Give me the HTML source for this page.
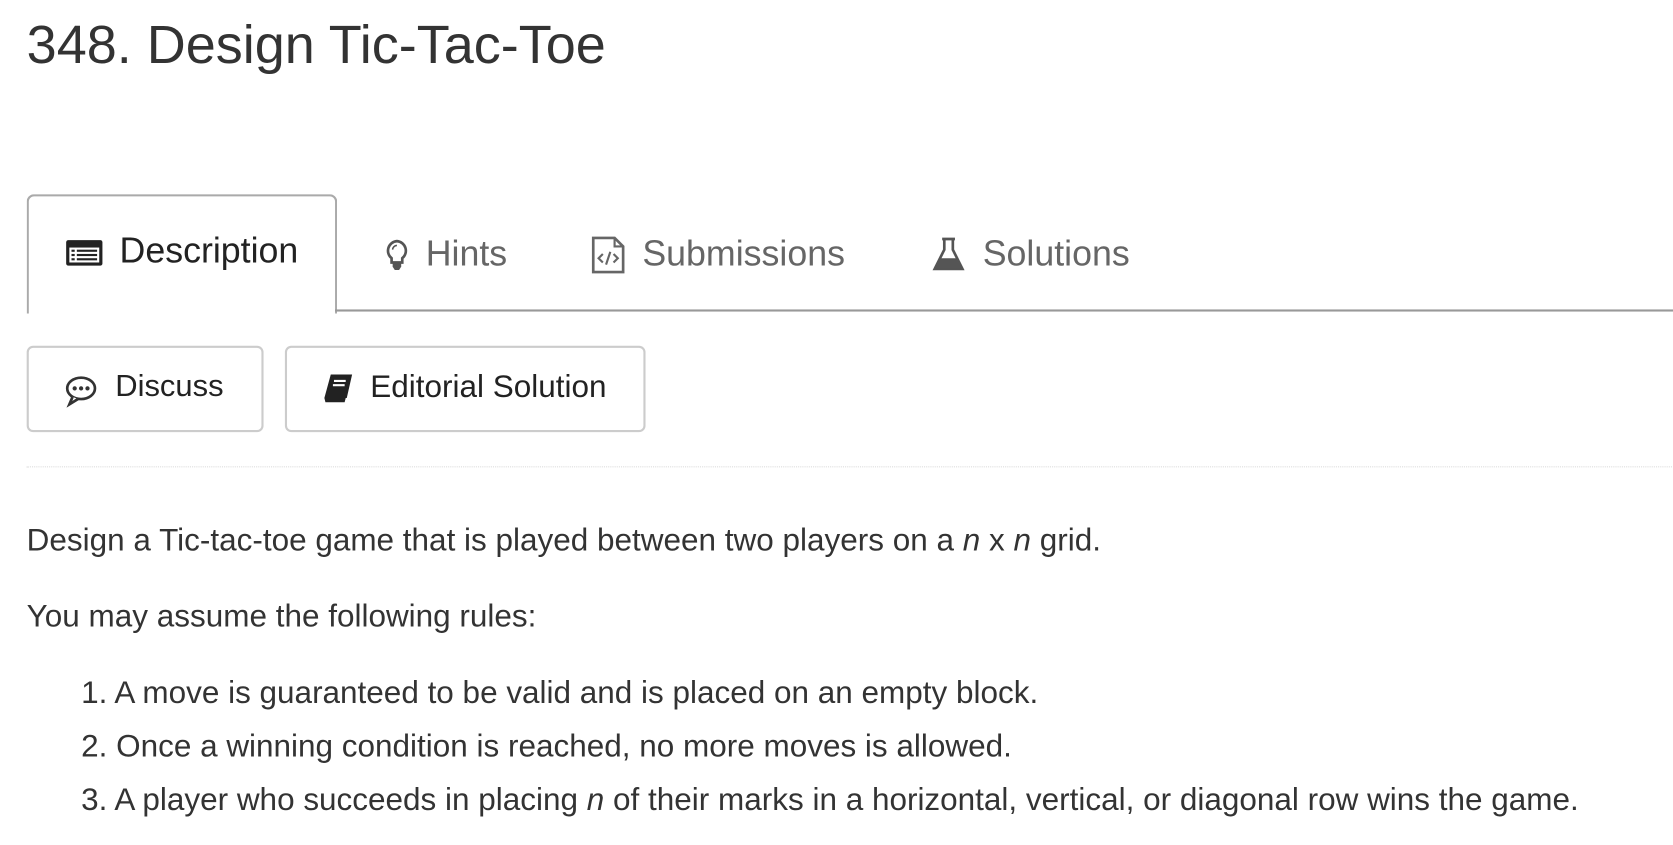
<!DOCTYPE html>
<html><head><meta charset="utf-8"><style>
body{margin:0;background:#fff;font-family:"Liberation Sans",sans-serif;color:#333;width:1673px;height:845px;overflow:hidden}
#w{position:absolute;left:0;top:0;width:1568px;height:792px;transform:scale(1.067);transform-origin:0 0}
.a{position:absolute;white-space:nowrap}
h1{position:absolute;left:25px;top:12px;margin:0;font-weight:normal;font-size:50.6px;color:#333;white-space:nowrap}
.tab{font-size:33.5px;color:#666}
.btn{position:absolute;border:2px solid #ccc;border-radius:6px;box-sizing:border-box}
.t{font-size:29.5px}
</style></head><body><div id="w">
<h1>348. Design Tic-Tac-Toe</h1>
<div class="a" style="left:25px;top:182px;width:291px;height:112px;border:2px solid #aaa;border-bottom:none;border-radius:7px 7px 0 0;box-sizing:border-box;background:#fff"></div>
<div class="a" style="left:314px;top:290px;width:1260px;height:2px;background:#999"></div>
<svg class="a" style="left:61px;top:224px" width="36" height="26" viewBox="0 0 36 26"><rect x="1" y="1" width="34" height="24" rx="2" fill="#222"/><rect x="4" y="8" width="28" height="14" fill="#fff"/><rect x="6" y="10" width="3" height="2" fill="#222"/><rect x="11" y="10" width="19" height="2" fill="#222"/><rect x="6" y="14" width="3" height="2" fill="#222"/><rect x="11" y="14" width="19" height="2" fill="#222"/><rect x="6" y="18" width="3" height="2" fill="#222"/><rect x="11" y="18" width="19" height="2" fill="#222"/></svg>
<div class="a tab" style="left:112px;top:217px;color:#222">Description</div>
<svg class="a" style="left:360px;top:224px" width="24" height="30" viewBox="0 0 24 30"><path d="M12 2a9 9 0 0 0-5 16v4h10v-4a9 9 0 0 0-5-16z" fill="none" stroke="#555" stroke-width="2.5"/><path d="M8 23h8v3l-2 3h-4l-2-3z" fill="#555"/><path d="M8 10a4 4 0 0 1 4-4" stroke="#555" stroke-width="1.5" fill="none"/></svg>
<div class="a tab" style="left:399px;top:220px">Hints</div>
<svg class="a" style="left:554px;top:221px" width="32" height="36" viewBox="0 0 32 36"><path d="M2 2h20l8 8v24H2z" fill="none" stroke="#666" stroke-width="2.5"/><path d="M22 2v8h8" fill="none" stroke="#666" stroke-width="2"/><path d="M11 17l-4 4 4 4M21 17l4 4-4 4M18 15l-4 12" stroke="#666" stroke-width="2" fill="none"/></svg>
<div class="a tab" style="left:602px;top:220px">Submissions</div>
<svg class="a" style="left:873px;top:222px" width="32" height="32" viewBox="0 0 32 32"><path d="M10 2h12M12 2v10L3 30h26L20 12V2" fill="none" stroke="#555" stroke-width="2.5"/><path d="M8 20h16l5 10H3z" fill="#555"/></svg>
<div class="a tab" style="left:921px;top:220px">Solutions</div>
<div class="btn" style="left:25px;top:324px;width:222px;height:81px"></div>
<svg class="a" style="left:60px;top:352px" width="32" height="30" viewBox="0 0 32 30"><ellipse cx="16" cy="12" rx="13" ry="10" fill="none" stroke="#333" stroke-width="2.5"/><path d="M8 20l-3 7 8-5" fill="#fff" stroke="#333" stroke-width="2.5"/><circle cx="10" cy="12" r="2" fill="#333"/><circle cx="16" cy="12" r="2" fill="#333"/><circle cx="22" cy="12" r="2" fill="#333"/></svg>
<div class="a" style="left:108px;top:346px;font-size:29px;color:#222">Discuss</div>
<div class="btn" style="left:267px;top:324px;width:338px;height:81px"></div>
<svg class="a" style="left:302px;top:350px" width="30" height="28" viewBox="0 0 30 28"><path d="M8 1h20l-5 22H2z" fill="#222"/><path d="M2 23h20l-1 4H3z" fill="#222"/><path d="M11 7h11M10 11h11" stroke="#fff" stroke-width="2"/></svg>
<div class="a" style="left:347px;top:346px;font-size:29.5px;color:#222">Editorial Solution</div>
<div class="a" style="left:25px;top:437px;width:1548px;border-top:1px dotted #ddd"></div>
<div class="a t" style="left:25px;top:490px">Design a Tic-tac-toe game that is played between two players on a <i>n</i> x <i>n</i> grid.</div>
<div class="a t" style="left:25px;top:561px">You may assume the following rules:</div>
<div class="a t" style="left:76px;top:633px">1. A move is guaranteed to be valid and is placed on an empty block.</div>
<div class="a t" style="left:76px;top:683px">2. Once a winning condition is reached, no more moves is allowed.</div>
<div class="a t" style="left:76px;top:733px">3. A player who succeeds in placing <i>n</i> of their marks in a horizontal, vertical, or diagonal row wins the game.</div>
</div></body></html>
